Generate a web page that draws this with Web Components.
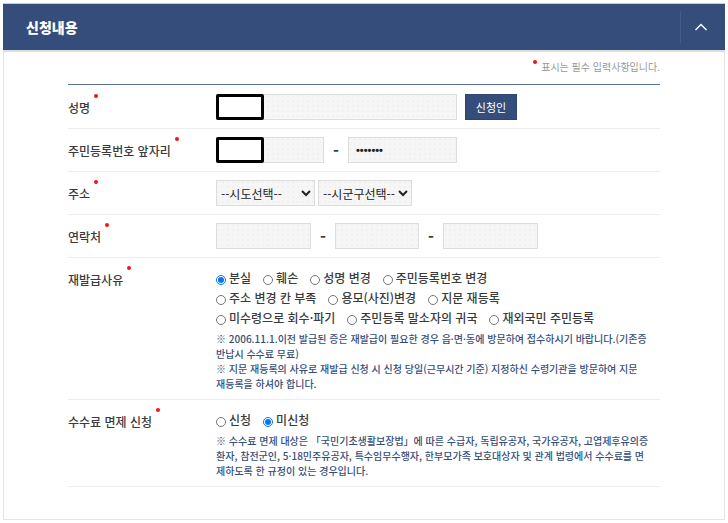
<!DOCTYPE html>
<html lang="ko">
<head>
<meta charset="utf-8">
<meta name="viewport" content="width=device-width, initial-scale=1">
<title>신청내용</title>
<style>
body { margin: 0; padding: 3px; background: #fff; color: #3a3a3a; font: 500 12px/20px "Noto Sans CJK KR", sans-serif; }
</style>
</head>
<body>
<collapse-panel heading="신청내용"><apply-form></apply-form></collapse-panel>
<script>
class BaseElement extends HTMLElement {
  connectedCallback() {
    if (!this.shadowRoot) this.attachShadow({ mode: "open" }).innerHTML = this.render();
    this.ready();
  }
  ready() {}
}

customElements.define("collapse-panel", class extends BaseElement {
  render() {
    return `<style>
      :host { display: block; }
      header { display: flex; align-items: center; background: #344d7a; color: #fff; height: 47px; border-top: 1px solid #c3ccd9; box-sizing: border-box; }
      h2 { flex: 1; margin: 0; padding-left: 23px; font-size: 14px; line-height: 20px; font-weight: 900; }
      button { width: 45px; height: 32px; padding: 0 4px 0 0; border: 0; border-left: 1px solid #465e87; background: none; color: #fff; display: flex; align-items: center; justify-content: center; }
      section { border: 1px solid #e3e3e3; border-top: 2px solid #ddd; padding: 5px 64px 32px; }
      section[hidden] { display: none; }
    </style>
    <header><h2>${this.getAttribute("heading")}</h2>
      <button type="button" aria-label="접기" aria-expanded="true"><svg width="14" height="10" viewBox="0 0 14 10" fill="none" stroke="currentColor" stroke-width="1.4"><path d="M1.5 8 7 2.5 12.5 8"/></svg></button>
    </header>
    <section><slot></slot></section>`;
  }
  ready() {
    const button = this.shadowRoot.querySelector("button");
    const body = this.shadowRoot.querySelector("section");
    button.onclick = () => {
      body.hidden = !body.hidden;
      button.setAttribute("aria-expanded", String(!body.hidden));
    };
  }
});

customElements.define("required-dot", class extends BaseElement {
  render() {
    return `<style>:host { display: inline-block; flex: none; width: 4px; height: 4px; border-radius: 50%; background: #f51414; }</style>`;
  }
});

customElements.define("form-row", class extends BaseElement {
  render() {
    return `<style>
      :host { display: grid; grid-template-columns: 148px minmax(0, 1fr); padding: 8px 0; border-bottom: 1px solid #ececec; }
      .label { display: flex; align-items: flex-start; gap: 4px; }
      .text { padding-top: 4px; }
    </style>
    <div class="label"><span class="text"><slot name="label"></slot></span><required-dot></required-dot></div>
    <div><slot></slot></div>`;
  }
});

customElements.define("radio-group", class extends BaseElement {
  render() {
    const name = this.getAttribute("name");
    const checked = this.getAttribute("checked");
    const lines = this.getAttribute("options").split("/").map(line => `<div>${line.split("|").map(text =>
      `<label><input type="radio" name="${name}" value="${text}"${text === checked ? " checked" : ""}><span>${text}</span></label>`).join("")}</div>`);
    return `<style>
      :host { display: block; }
      div { display: flex; flex-wrap: wrap; column-gap: 12px; }
      label { display: flex; align-items: center; gap: 3px; }
      input { width: 10px; height: 10px; margin: 3px 0 0; accent-color: #0b74f5; }
    </style>${lines.join("")}`;
  }
});

customElements.define("help-note", class extends BaseElement {
  render() {
    return `<style>:host { display: block; color: #344d7a; font-size: 10px; line-height: 15px; white-space: nowrap; }</style><slot></slot>`;
  }
});

customElements.define("apply-form", class extends BaseElement {
  render() {
    return `<style>
      :host { display: block; }
      .legend { display: flex; justify-content: flex-end; gap: 4px; margin: 0; padding-bottom: 7px; color: #999; font-size: 10px; font-weight: 400; }
      .legend required-dot { margin-top: 3px; }
      .rows { border-top: 1px solid #5b7096; padding-top: 1px; }
      .line { display: flex; align-items: center; }
      input, select { box-sizing: border-box; height: 26px; margin: 0; border: 1px solid #ddd; border-radius: 0; color: #222; font: 400 12px "Noto Sans CJK KR", sans-serif;
        background: #f6f6f6 radial-gradient(circle at 1px 1px, #f1f1f1 1px, transparent 1px) 0 0 / 5px 5px; }
      input { padding: 0 7px; width: 100%; }
      input[type="password"] { font: 700 11px "Liberation Sans", sans-serif; }
      select { padding: 0; }
      select + select { margin-left: 3px; }
      .field { position: relative; display: flex; }
      .w1 { width: 241px; } .w2 { width: 108px; } .w3 { width: 109px; } .w4 { width: 95px; } .w5 { width: 84px; }
      .s1 { width: 99px; } .s2 { width: 94px; }
      .mask { position: absolute; inset: 0 auto 0 0; width: 48px; box-sizing: border-box; border: 3px solid #000; border-radius: 2px; background: #fff; }
      .dash { width: 24px; text-align: center; font-size: 16px; font-weight: 700; }
      button { margin-left: 8px; height: 26px; width: 52px; padding: 0; border: 1px solid #2c4573; background: #344d7a; color: #fff; font: 400 11px "Noto Sans CJK KR", sans-serif; }
      .choices { padding-top: 2px; }
      help-note { margin-top: 3px; }
      help-note + help-note { margin-top: 0; }
    </style>
    <form>
      <p class="legend"><required-dot></required-dot><span>표시는 필수 입력사항입니다.</span></p>
      <div class="rows">
        <form-row><label slot="label" for="name">성명</label>
          <div class="line"><span class="field w1"><input id="name" type="text"><span class="mask"></span></span><button type="button">신청인</button></div></form-row>
        <form-row><label slot="label" for="rrn">주민등록번호 앞자리</label>
          <div class="line"><span class="field w2"><input id="rrn" type="text"><span class="mask"></span></span><span class="dash">-</span><span class="field w3"><input type="password" value="0000000" aria-label="주민등록번호 뒷자리"></span></div></form-row>
        <form-row><label slot="label" for="sido">주소</label>
          <div class="line"><select class="s1" id="sido"><option>--시도선택--</option></select><select class="s2" aria-label="시군구"><option>--시군구선택--</option></select></div></form-row>
        <form-row><label slot="label" for="tel">연락처</label>
          <div class="line"><span class="field w4"><input id="tel" type="tel"></span><span class="dash">-</span><span class="field w5"><input type="tel" aria-label="연락처 가운데 자리"></span><span class="dash">-</span><span class="field w4"><input type="tel" aria-label="연락처 끝자리"></span></div></form-row>
        <form-row><span slot="label">재발급사유</span>
          <div class="choices">
            <radio-group role="radiogroup" aria-label="재발급사유" name="reason" checked="분실" options="분실|훼손|성명 변경|주민등록번호 변경/주소 변경 칸 부족|용모(사진)변경|지문 재등록/미수령으로 회수·파기|주민등록 말소자의 귀국|재외국민 주민등록"></radio-group>
            <help-note>※ 2006.11.1.이전 발급된 증은 재발급이 필요한 경우 읍·면·동에 방문하여 접수하시기 바랍니다.(기존증<br>반납시 수수료 무료)</help-note>
            <help-note>※ 지문 재등록의 사유로 재발급 신청 시 신청 당일(근무시간 기준) 지정하신 수령기관을 방문하여 지문<br>재등록을 하셔야 합니다.</help-note>
          </div></form-row>
        <form-row><span slot="label">수수료 면제 신청</span>
          <div class="choices">
            <radio-group role="radiogroup" aria-label="수수료 면제 신청" name="waiver" checked="미신청" options="신청|미신청"></radio-group>
            <help-note>※ 수수료 면제 대상은 「국민기초생활보장법」에 따른 수급자, 독립유공자, 국가유공자, 고엽제후유의증<br>환자, 참전군인, 5·18민주유공자, 특수임무수행자, 한부모가족 보호대상자 및 관계 법령에서 수수료를 면<br>제하도록 한 규정이 있는 경우입니다.</help-note>
          </div></form-row>
      </div>
    </form>`;
  }
});
</script>
</body>
</html>
